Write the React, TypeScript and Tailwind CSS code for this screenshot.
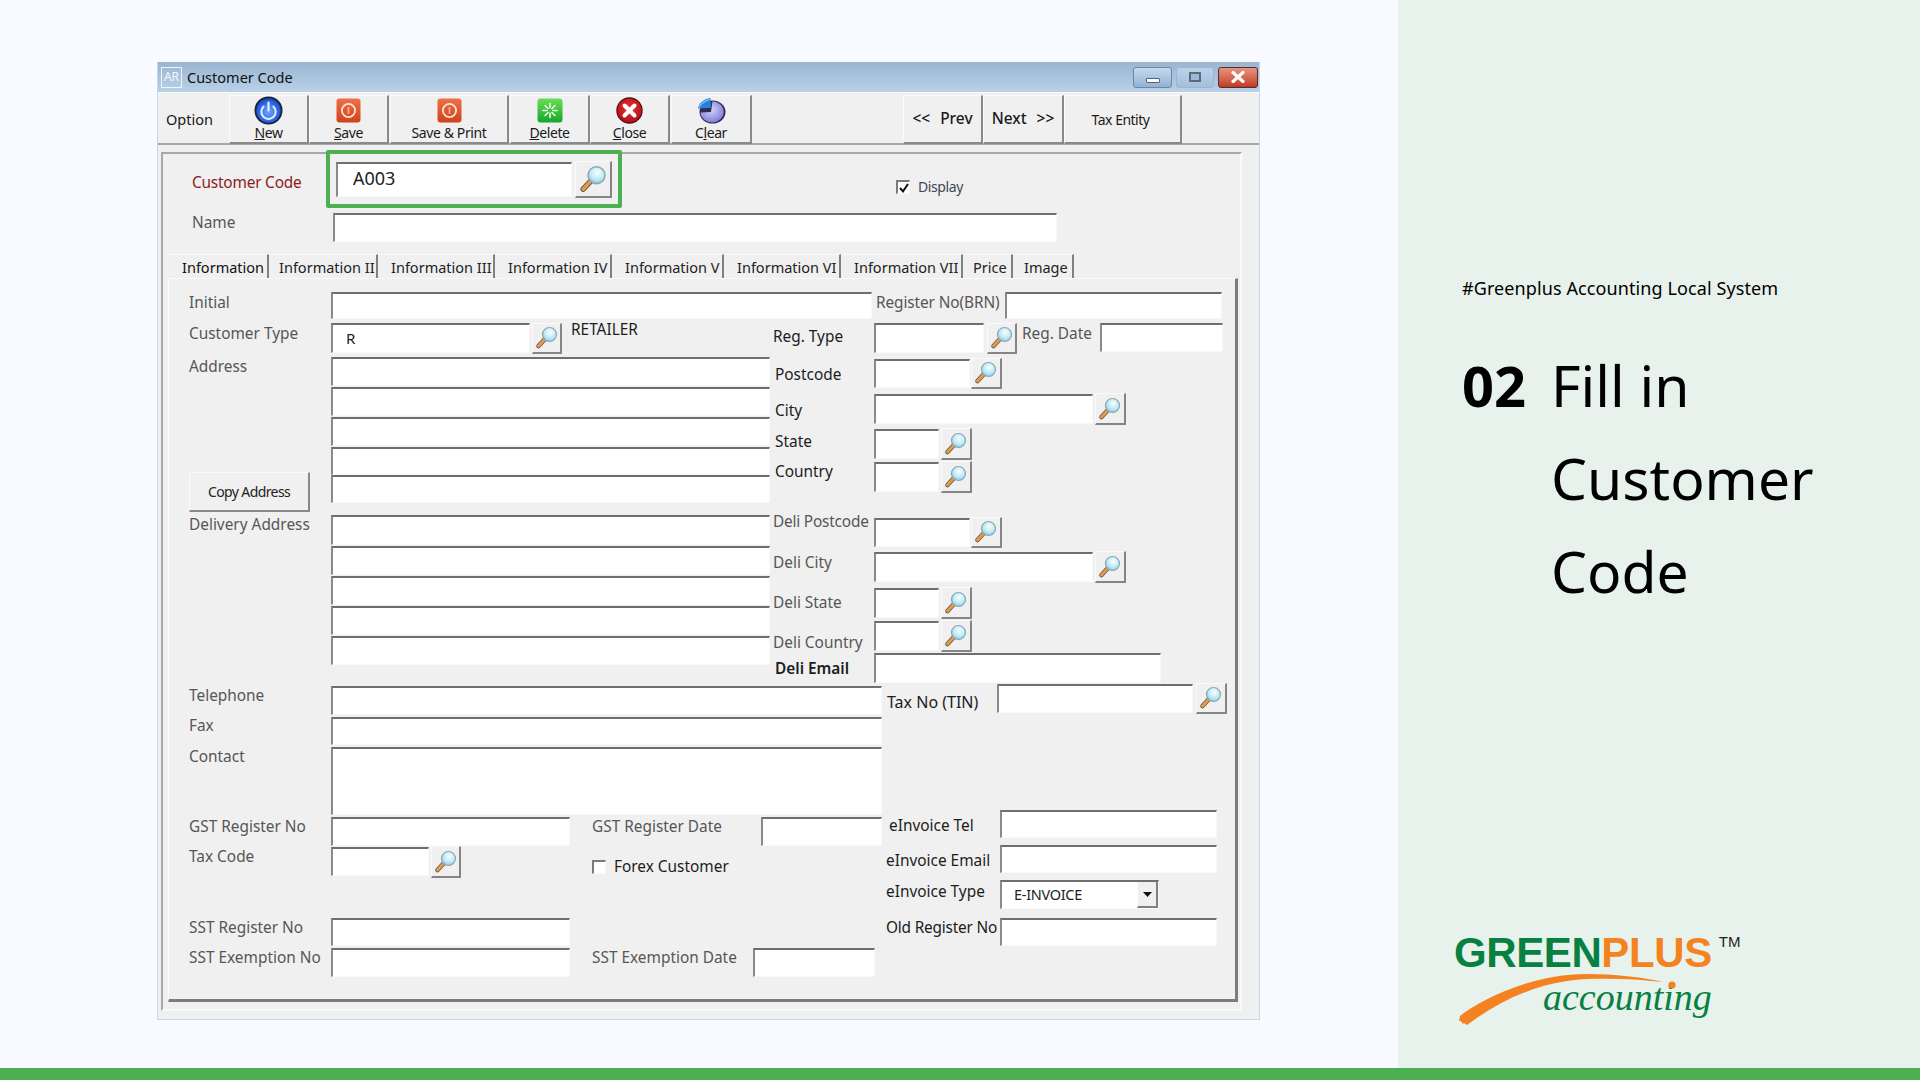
import React from "react";

const fieldBase =
  "block shrink-0 bg-white border-t-2 border-l-2 border-r border-b border-t-[#6e6e6e] border-l-[#8a8a8a] border-r-[#f8f8f8] border-b-[#f8f8f8] outline-none";

function Field({ className = "", value = "" }: { className?: string; value?: string }) {
  return <input readOnly value={value} className={fieldBase + " " + className} />;
}

function Lens({ size = 24 }: { size?: number }) {
  return (
    <svg width={size} height={size} viewBox="0 0 24 24">
      <defs>
        <radialGradient id="lensFill" cx="0.55" cy="0.35" r="0.7">
          <stop offset="0" stopColor="#f6feff" />
          <stop offset="0.6" stopColor="#bde9f4" />
          <stop offset="1" stopColor="#7dbdd6" />
        </radialGradient>
      </defs>
      <path d="M9.5 13.5 3.5 20" stroke="#6b5a45" strokeWidth="4.6" strokeLinecap="round" />
      <path d="M9.5 13.5 3.5 20" stroke="#e39a4e" strokeWidth="3" strokeLinecap="round" />
      <circle cx="14.5" cy="8.5" r="7" fill="url(#lensFill)" stroke="#8ba6b4" strokeWidth="1.2" />
    </svg>
  );
}

function Search({ className = "", size = 24 }: { className?: string; size?: number }) {
  return (
    <button
      className={
        "flex shrink-0 items-center justify-center bg-[#f0f0f0] border-t border-l border-r-2 border-b-2 border-t-[#fafafa] border-l-[#fafafa] border-r-[#858585] border-b-[#858585] " +
        className
      }
    >
      <Lens size={size} />
    </button>
  );
}

function L({
  children,
  className = "",
  dark = false,
}: {
  children: React.ReactNode;
  className?: string;
  dark?: boolean;
}) {
  return (
    <span
      className={
        "block shrink-0 text-[15.4px] leading-5 whitespace-nowrap " +
        (dark ? "text-[#1c1c1c] " : "text-[#565656] ") +
        className
      }
    >
      {children}
    </span>
  );
}

function IconNew() {
  return (
    <svg width="29" height="29" viewBox="0 0 29 29">
      <defs>
        <radialGradient id="gNew" cx="0.5" cy="0.55" r="0.6">
          <stop offset="0" stopColor="#6fa8ff" />
          <stop offset="0.7" stopColor="#2a62e0" />
          <stop offset="1" stopColor="#123a9c" />
        </radialGradient>
      </defs>
      <circle cx="14.5" cy="14.5" r="14" fill="#16223f" />
      <circle cx="14.5" cy="14.5" r="12.2" fill="url(#gNew)" />
      <path d="M9.6 10.5a7.2 7.2 0 1 0 9.8 0" fill="none" stroke="#e4efff" strokeWidth="2" strokeLinecap="round" />
      <path d="M14.5 6.5v8" stroke="#e4efff" strokeWidth="2.2" strokeLinecap="round" />
    </svg>
  );
}

function IconSave({ id }: { id: string }) {
  return (
    <svg width="25" height="25" viewBox="0 0 25 25">
      <defs>
        <linearGradient id={id} x1="0" y1="0" x2="0" y2="1">
          <stop offset="0" stopColor="#ee7148" />
          <stop offset="1" stopColor="#d0421a" />
        </linearGradient>
      </defs>
      <rect x="0.5" y="0.5" width="24" height="24" rx="3" fill={"url(#" + id + ")"} />
      <circle cx="12.5" cy="12.5" r="6.6" fill="none" stroke="#fde5da" strokeWidth="1.8" />
      <path d="M12.5 9v7" stroke="#f7b49b" strokeWidth="1.6" />
    </svg>
  );
}

function IconDelete() {
  const rays = [0, 45, 90, 135, 180, 225, 270, 315];
  return (
    <svg width="26" height="25" viewBox="0 0 26 25">
      <defs>
        <linearGradient id="gDel" x1="0" y1="0" x2="0" y2="1">
          <stop offset="0" stopColor="#6bdc55" />
          <stop offset="1" stopColor="#16a62f" />
        </linearGradient>
      </defs>
      <rect x="0.5" y="0.5" width="25" height="24" rx="3" fill="url(#gDel)" />
      {rays.map((r) => (
        <path key={r} d="M13 5.5v4.2" stroke="#e9ffe4" strokeWidth="1.6" strokeLinecap="round" transform={"rotate(" + r + " 13 12.5)"} />
      ))}
    </svg>
  );
}

function IconClose() {
  return (
    <svg width="27" height="27" viewBox="0 0 27 27">
      <defs>
        <radialGradient id="gClose" cx="0.5" cy="0.4" r="0.65">
          <stop offset="0" stopColor="#ee3030" />
          <stop offset="1" stopColor="#b00d14" />
        </radialGradient>
      </defs>
      <circle cx="13.5" cy="13.5" r="13.2" fill="#4b1012" />
      <circle cx="13.5" cy="13.5" r="12" fill="url(#gClose)" />
      <path d="M8.5 8.5l10 10M18.5 8.5l-10 10" stroke="#fff" strokeWidth="4" strokeLinecap="round" />
    </svg>
  );
}

function IconClear() {
  return (
    <svg width="29" height="27" viewBox="0 0 29 27">
      <defs>
        <radialGradient id="gClear" cx="0.45" cy="0.4" r="0.7">
          <stop offset="0" stopColor="#d6d4fb" />
          <stop offset="1" stopColor="#7773d8" />
        </radialGradient>
      </defs>
      <ellipse cx="15.5" cy="15" rx="13" ry="11.6" fill="#2d2d57" />
      <path d="M15.5 4.2a11.6 10.6 0 1 1-12 11.3l10.5-.6z" fill="url(#gClear)" />
      <path d="M1 11.5C1.5 6.5 6.5 2 13.5 1l.6 9.7z" fill="#2a7fd8" />
      <path d="M2 10.6C4 6.6 8 3.6 13 2.4" fill="none" stroke="#7fc0f4" strokeWidth="1.2" />
    </svg>
  );
}

function ToolButton({
  icon,
  label,
  className = "",
}: {
  icon: React.ReactNode;
  label: React.ReactNode;
  className?: string;
}) {
  return (
    <button
      className={
        "flex shrink-0 flex-col items-center h-[49px] bg-[#f0f0f0] border-t border-l border-r-2 border-b-2 border-t-[#fafafa] border-l-[#fafafa] border-r-[#8a8a8a] border-b-[#8a8a8a] " +
        className
      }
    >
      <span className="flex h-[28px] shrink-0 items-center justify-center">{icon}</span>
      <span className="block text-[14px] leading-[18px] tracking-[-0.4px] text-[#1a1a1a] whitespace-nowrap">{label}</span>
    </button>
  );
}

const tabs: [string, string, string, string][] = [
  ["Information", "w-[101px]", "pl-[14px]", "pt-0"],
  ["Information II", "w-[109px]", "pl-[10px]", "pt-px"],
  ["Information III", "w-[117px]", "pl-[13px]", "pt-px"],
  ["Information IV", "w-[117px]", "pl-[13px]", "pt-px"],
  ["Information V", "w-[112px]", "pl-[13px]", "pt-px"],
  ["Information VI", "w-[117px]", "pl-[13px]", "pt-px"],
  ["Information VII", "w-[122px]", "pl-[13px]", "pt-px"],
  ["Price", "w-[50px]", "pl-[10px]", "pt-px"],
  ["Image", "w-[61px]", "pl-[11px]", "pt-px"],
];

function App() {
  return (
    <div className="flex h-[1080px] w-[1920px] flex-col overflow-hidden font-['Noto_Sans',sans-serif]">
      <div className="flex h-[1068px]">
        {/* Slide left: application window */}
        <div className="h-full w-[1398px] bg-[#f8faff] pl-[157px] pt-[62px]">
          <div className="flex h-[958px] w-[1103px] flex-col border-b border-l border-r border-b-[#c5d6e6] border-l-[#c5d6e6] border-r-[#c5d6e6] bg-[#f0f0f0]">
            {/* Title bar */}
            <div className="flex h-[30px] shrink-0 items-center bg-gradient-to-b from-[#9ab5d2] to-[#b9d1e8] pl-[3px]">
              <span className="flex h-[21px] w-[21px] items-center justify-center border border-[#eef4fb] text-[12px] leading-none text-[#f4f8fc]">
                AR
              </span>
              <span className="ml-[5px] text-[14.5px] leading-5 text-[#111]">Customer Code</span>
              <div className="ml-auto mr-[1px] flex items-center gap-[4px]">
                <span className="flex h-[21px] w-[39px] items-end justify-center rounded-[3px] border border-[#6f87a3] bg-gradient-to-b from-[#c5d9ed] to-[#93b3d4] pb-[4px]">
                  <span className="block h-[5px] w-[14px] rounded-[1px] border border-[#50627a] bg-white" />
                </span>
                <span className="flex h-[21px] w-[38px] items-center justify-center rounded-[3px] border border-[#9db5cf] bg-gradient-to-b from-[#bcd2e8] to-[#a3bfdb]">
                  <span className="block h-[10px] w-[12px] border-2 border-[#5a6b80] bg-[#9fb8d4]" />
                </span>
                <span className="flex h-[21px] w-[40px] items-center justify-center rounded-[3px] border border-[#5c2a2a] bg-gradient-to-b from-[#e6957f] to-[#bf3a26]">
                  <svg width="16" height="12" viewBox="0 0 16 12">
                    <path d="M3 1.5l10 9M13 1.5l-10 9" stroke="#fff" strokeWidth="3.2" strokeLinecap="round" />
                  </svg>
                </span>
              </div>
            </div>

            {/* Toolbar */}
            <div className="flex h-[53px] shrink-0 items-start border-b-2 border-t border-b-[#a8a8a8] border-t-[#fafafa] pt-[2px]">
              <span className="flex h-[49px] w-[71px] shrink-0 items-center pl-[8px] text-[14.5px] text-[#1a1a1a]">Option</span>
              <ToolButton className="w-[80px]" icon={<IconNew />} label={<><u>N</u>ew</>} />
              <ToolButton className="w-[80px]" icon={<IconSave id="gSave1" />} label={<><u>S</u>ave</>} />
              <ToolButton className="ml-[1px] w-[119px]" icon={<IconSave id="gSave2" />} label="Save & Print" />
              <ToolButton className="w-[80px] ml-px" icon={<IconDelete />} label={<><u>D</u>elete</>} />
              <ToolButton className="w-[80px]" icon={<IconClose />} label={<><u>C</u>lose</>} />
              <ToolButton className="ml-px w-[81px]" icon={<IconClear />} label={<>C<u>l</u>ear</>} />
              <button className="ml-[151px] flex h-[49px] w-[80px] shrink-0 items-center justify-center gap-[10px] border-t border-l border-r-2 border-b-2 border-t-[#fafafa] border-l-[#fafafa] border-r-[#8a8a8a] border-b-[#8a8a8a] text-[15.5px] font-medium text-[#1a1a1a]">
                <span>&lt;&lt;</span>
                <span>Prev</span>
              </button>
              <button className="flex h-[49px] w-[81px] shrink-0 items-center justify-center gap-[10px] border-t border-l border-r-2 border-b-2 border-t-[#fafafa] border-l-[#fafafa] border-r-[#8a8a8a] border-b-[#8a8a8a] text-[15.5px] font-medium text-[#1a1a1a]">
                <span>Next</span>
                <span>&gt;&gt;</span>
              </button>
              <button className="flex h-[49px] w-[118px] shrink-0 items-center justify-center border-t border-l border-r-2 border-b-2 border-t-[#fafafa] border-l-[#fafafa] border-r-[#8a8a8a] border-b-[#8a8a8a] pr-[4px] text-[14px] tracking-[-0.5px] text-[#1a1a1a]">
                Tax Entity
              </button>
            </div>

            {/* Group panel */}
            <div className="ml-[3px] mt-[7px] h-[859px] w-[1081px] border-b-2 border-l-2 border-r-2 border-t-2 border-b-[#fafafa] border-l-[#a8a8a8] border-r-[#fafafa] border-t-[#a8a8a8]">
              {/* Customer code row */}
              <div className="mt-[7px] flex items-start pl-[29px]">
                <L className="mt-[12px] w-[144px] tracking-[-0.2px] text-[#8c1a1a]!">Customer Code</L>
                <div className="relative flex w-[276px] shrink-0 items-start">
                  <div className="pointer-events-none absolute -bottom-[10px] -left-[10px] -right-[10px] -top-[11px] rounded-[2px] border-4 border-[#4caf50]" />
                  <Field className="mt-px h-[35px] w-[236px] pb-[4px] pl-[15px] text-[18px] text-[#222]" value="A003" />
                  <Search className="ml-[3px] h-[37px] w-[37px]" size={29} />
                </div>
                <span className="ml-[284px] mt-[19px] flex h-[14px] w-[14px] shrink-0 items-center justify-center border-t-2 border-l-2 border-r border-b border-t-[#7a7a7a] border-l-[#7a7a7a] border-r-[#f8f8f8] border-b-[#f8f8f8] bg-white">
                  <svg width="10" height="10" viewBox="0 0 10 10">
                    <path d="M1 5l3 3.4L9 1" fill="none" stroke="#111" strokeWidth="2" />
                  </svg>
                </span>
                <span className="ml-[8px] mt-[16px] text-[14px] leading-5 tracking-[-0.4px] text-[#3f4654]">Display</span>
              </div>

              {/* Name row */}
              <div className="mt-[15px] flex pl-[29px]">
                <L className="mt-0 w-[141px]">Name</L>
                <Field className="h-[29px] w-[724px]" />
              </div>

              {/* Tabs */}
              <div className="ml-[5px] mt-[12px] flex h-[24px]">
                {tabs.map(([t, w, pl, pt], i) => (
                  <button
                    key={t}
                    className={
                      "block h-[24px] shrink-0 whitespace-nowrap border-r-2 border-t border-r-[#808080] border-t-[#fafafa] text-left text-[14.5px] leading-[22px] " +
                      (i === 0 ? "text-[#111] " : "text-[#222] ") +
                      w + " " + pl + " " + pt
                    }
                  >
                    {t}
                  </button>
                ))}
              </div>

              {/* Tab page */}
              <div className="ml-[5px] h-[724px] w-[1070px] border-b-[3px] border-l border-r-[3px] border-t border-b-[#7c7c7c] border-l-[#fafafa] border-r-[#7c7c7c] border-t-[#fafafa] pl-[20px]">
                {/* Initial */}
                <div className="mt-[13px] flex">
                  <L className="mt-px w-[142px]">Initial</L>
                  <Field className="h-[27px] w-[541px]" />
                  <L className="ml-[4px] mt-px w-[129px] tracking-[-0.1px]">Register No(BRN)</L>
                  <Field className="h-[27px] w-[217px]" />
                </div>

                {/* Middle block */}
                <div className="mt-[4px] flex h-[360px]">
                  <div className="w-[581px] shrink-0">
                    <div className="flex h-[31px]">
                      <L className="w-[142px] mt-px">Customer Type</L>
                      <Field className="h-[30px] w-[199px] pb-[2px] pl-[13px] text-[15px] text-[#222]" value="R" />
                      <Search className="ml-[2px] h-[31px] w-[30px]" />
                      <L dark className="ml-[9px] -mt-[3px]">RETAILER</L>
                    </div>
                    <div className="mt-[3px] flex">
                      <div className="w-[142px] shrink-0">
                        <L>Address</L>
                        <button className="mt-[95px] block h-[40px] w-[121px] border-t border-l border-r-2 border-b-2 border-t-[#fafafa] border-l-[#fafafa] border-r-[#8a8a8a] border-b-[#8a8a8a] text-[14px] tracking-[-0.6px] text-[#222]">
                          Copy Address
                        </button>
                      </div>
                      <div className="w-[439px] shrink-0">
                        <Field className="h-[29px] w-full" />
                        <Field className="mt-px h-[29px] w-full" />
                        <Field className="mt-px h-[29px] w-full" />
                        <Field className="mt-px h-[28px] w-full" />
                        <Field className="h-[28px] w-full" />
                      </div>
                    </div>
                    <div className="flex">
                      <div className="w-[142px] shrink-0 pt-[3px]">
                        <L>Delivery Address</L>
                      </div>
                      <div className="w-[439px] shrink-0 pt-[3px]">
                        <Field className="h-[30px] w-full" />
                        <Field className="mt-px h-[29px] w-full" />
                        <Field className="mt-px h-[29px] w-full" />
                        <Field className="mt-px h-[29px] w-full" />
                        <Field className="mt-px h-[29px] w-full" />
                      </div>
                    </div>
                  </div>

                  <div className="ml-[2px] w-[460px] shrink-0">
                    <div className="flex">
                      <L dark className="mt-[4px] w-[102px] pl-px">Reg. Type</L>
                      <Field className="h-[30px] w-[110px]" />
                      <Search className="ml-[3px] h-[31px] w-[30px]" />
                      <L className="ml-[5px] mt-px w-[78px]">Reg. Date</L>
                      <Field className="h-[29px] w-[123px]" />
                    </div>
                    <div className="mt-[4px] flex h-[31px]">
                      <L dark className="mt-[7px] w-[102px] pl-[3px]">Postcode</L>
                      <Field className="mt-px h-[29px] w-[96px]" />
                      <Search className="ml-px h-[31px] w-[31px]" />
                    </div>
                    <div className="mt-[4px] flex h-[32px]">
                      <L dark className="mt-[8px] w-[102px] pl-[3px]">City</L>
                      <Field className="mt-px h-[30px] w-[219px]" />
                      <Search className="ml-[2px] h-[32px] w-[31px]" />
                    </div>
                    <div className="mt-[3px] flex h-[32px]">
                      <L dark className="mt-[4px] w-[102px] pl-[3px]">State</L>
                      <Field className="mt-px h-[30px] w-[65px]" />
                      <Search className="ml-[2px] h-[32px] w-[31px]" />
                    </div>
                    <div className="mt-px flex h-[32px]">
                      <L dark className="mt-px w-[102px] pl-[3px]">Country</L>
                      <Field className="mt-px h-[30px] w-[65px]" />
                      <Search className="ml-[2px] h-[32px] w-[31px]" />
                    </div>
                    <div className="mt-[24px] flex h-[31px]">
                      <L className="-mt-[5px] w-[102px] pl-px tracking-[-0.2px]">Deli Postcode</L>
                      <Field className="mt-px h-[29px] w-[96px]" />
                      <Search className="ml-px h-[31px] w-[31px]" />
                    </div>
                    <div className="mt-[3px] flex h-[32px]">
                      <L className="mt-[2px] w-[102px] pl-px">Deli City</L>
                      <Field className="mt-px h-[30px] w-[219px]" />
                      <Search className="ml-[2px] h-[32px] w-[31px]" />
                    </div>
                    <div className="mt-[4px] flex h-[32px]">
                      <L className="mt-[6px] w-[102px] pl-px">Deli State</L>
                      <Field className="mt-px h-[30px] w-[65px]" />
                      <Search className="ml-[2px] h-[32px] w-[31px]" />
                    </div>
                    <div className="mt-px flex h-[32px]">
                      <L className="mt-[13px] w-[102px] pl-px">Deli Country</L>
                      <Field className="mt-px h-[30px] w-[65px]" />
                      <Search className="ml-[2px] h-[32px] w-[31px]" />
                    </div>
                    <div className="mt-px flex h-[30px]">
                      <L dark className="mt-[6px] w-[102px] pl-[3px] font-semibold">Deli Email</L>
                      <Field className="h-[30px] w-[287px]" />
                    </div>
                  </div>
                </div>

                {/* Lower block */}
                <div className="flex">
                  <div className="w-[693px] shrink-0">
                    <div className="mt-[3px] flex">
                      <L className="w-[142px]">Telephone</L>
                      <Field className="h-[29px] w-[551px]" />
                    </div>
                    <div className="mt-[2px] flex">
                      <L className="-mt-px w-[142px]">Fax</L>
                      <Field className="h-[28px] w-[551px]" />
                    </div>
                    <div className="mt-[2px] flex">
                      <L className="w-[142px]">Contact</L>
                      <Field className="h-[68px] w-[551px]" />
                    </div>
                    <div className="mt-[2px] flex">
                      <L className="w-[142px]">GST Register No</L>
                      <Field className="h-[29px] w-[239px]" />
                      <L className="ml-[22px] w-[169px]">GST Register Date</L>
                      <Field className="h-[29px] w-[121px]" />
                    </div>
                    <div className="flex h-[32px]">
                      <L className="w-[142px] mt-px">Tax Code</L>
                      <Field className="mt-px h-[29px] w-[98px]" />
                      <Search className="ml-[2px] h-[32px] w-[30px]" />
                      <span className="ml-[131px] mt-[14px] block h-[14px] w-[14px] shrink-0 border-t-2 border-l-2 border-r border-b border-t-[#7a7a7a] border-l-[#7a7a7a] border-r-[#f8f8f8] border-b-[#f8f8f8] bg-white" />
                      <L dark className="ml-[8px] mt-[11px]">Forex Customer</L>
                    </div>
                    <div className="mt-[40px] flex">
                      <L className="w-[142px]">SST Register No</L>
                      <Field className="h-[28px] w-[239px]" />
                    </div>
                    <div className="mt-[2px] flex">
                      <L className="w-[142px]">SST Exemption No</L>
                      <Field className="h-[29px] w-[239px]" />
                      <L className="ml-[22px] w-[161px]">SST Exemption Date</L>
                      <Field className="h-[29px] w-[122px]" />
                    </div>
                  </div>

                  <div className="ml-[4px] w-[340px] shrink-0">
                    <div className="flex h-[31px]">
                      <L dark className="mt-[9px] w-[111px] pl-px text-[16px]!">Tax No (TIN)</L>
                      <Field className="mt-px h-[29px] w-[196px]" />
                      <Search className="ml-[3px] h-[31px] w-[31px]" />
                    </div>
                    <div className="mt-[96px] flex">
                      <L dark className="mt-[6px] w-[114px] pl-[3px]">eInvoice Tel</L>
                      <Field className="h-[28px] w-[217px]" />
                    </div>
                    <div className="mt-[7px] flex">
                      <L dark className="mt-[6px] w-[114px]">eInvoice Email</L>
                      <Field className="h-[28px] w-[217px]" />
                    </div>
                    <div className="mt-[7px] flex">
                      <L dark className="mt-[2px] w-[114px]">eInvoice Type</L>
                      <div className="flex h-[29px] w-[159px] shrink-0 border-t-2 border-l-2 border-r border-b border-t-[#6e6e6e] border-l-[#8a8a8a] border-r-[#f8f8f8] border-b-[#f8f8f8] bg-white">
                        <span className="flex-1 pl-[12px] text-[14.5px] leading-[24px] tracking-[-0.3px] text-[#222]">E-INVOICE</span>
                        <span className="flex w-[21px] items-center justify-center border-b-2 border-r-2 border-l border-b-[#808080] border-r-[#808080] border-l-[#fafafa] bg-[#f0f0f0]">
                          <svg width="9" height="5" viewBox="0 0 9 5">
                            <path d="M0 0h9L4.5 5z" fill="#111" />
                          </svg>
                        </span>
                      </div>
                    </div>
                    <div className="mt-[9px] flex">
                      <L dark className="w-[114px] tracking-[-0.2px]">Old Register No</L>
                      <Field className="h-[28px] w-[217px]" />
                    </div>
                  </div>
                </div>
              </div>
            </div>
          </div>
        </div>

        {/* Slide right panel */}
        <div className="flex h-full w-[522px] flex-col bg-[#e8f2ec] pl-[64px] pt-[276px] text-black">
          <p className="text-[18px] leading-6 tracking-[0.1px]">#Greenplus Accounting Local System</p>
          <div className="mt-[39px] flex">
            <span className="w-[89px] shrink-0 text-[56px] font-bold leading-[93px]">02</span>
            <div className="text-[57px] leading-[93px]">
              <div>Fill in</div>
              <div>Customer</div>
              <div>Code</div>
            </div>
          </div>

          {/* Logo */}
          <div className="relative mt-auto mb-[42px] ml-[-9px] h-[96px] w-[300px] shrink-0">
            <div className="flex items-start pl-px font-['Liberation_Sans',sans-serif]">
              <span className="text-[42px] font-bold leading-[46px] tracking-[-0.4px] text-[#078042]">GREEN</span>
              <span className="text-[42px] font-bold leading-[46px] tracking-[-0.4px] text-[#f58220]">PLUS</span>
              <span className="ml-[7px] text-[15px] leading-6 text-[#222]">TM</span>
            </div>
            <div className="ml-[90px] mt-[1px] font-['Liberation_Serif',serif] text-[38px] italic leading-[40px] text-[#078042]">accounting</div>
            <svg className="absolute left-0 top-0" width="300" height="96" viewBox="0 0 300 96">
              <path
                d="M7 86C30 68 80 44 134 44c26 0 56 3 76 8-25-3-50-4-76-3C90 51 50 68 14 95l-3-2-1 1-2-3-2 0z"
                fill="#f58220"
              />
              <circle cx="219" cy="55" r="3.6" fill="#f58220" />
            </svg>
          </div>
        </div>
      </div>
      <div className="h-[12px] shrink-0 bg-[#4caf50]" />
    </div>
  );
}

export default App;
